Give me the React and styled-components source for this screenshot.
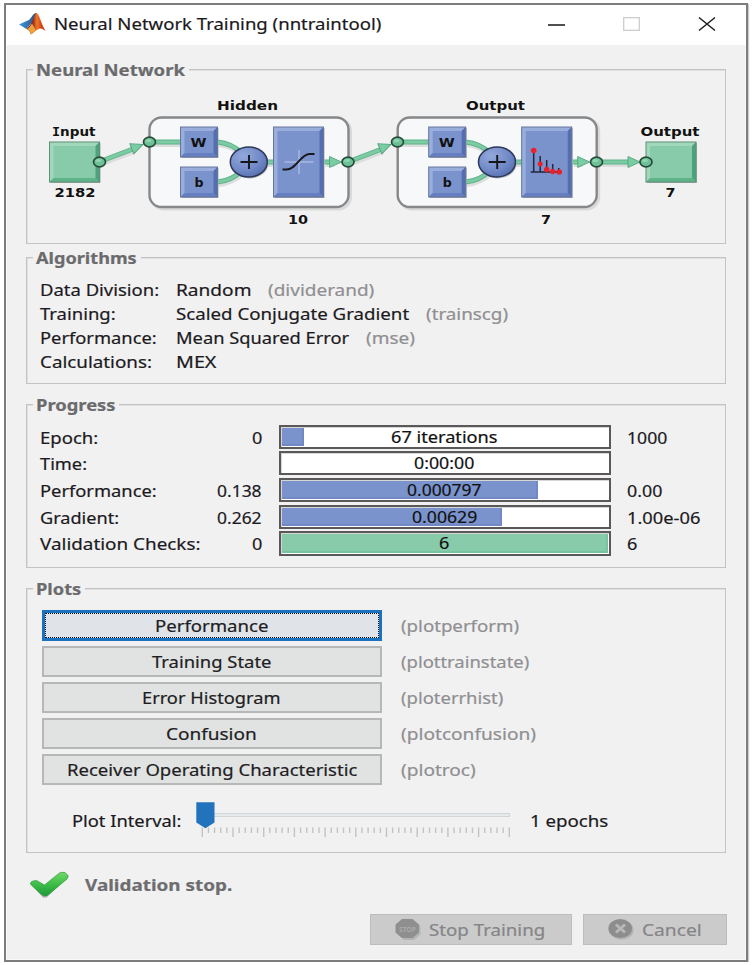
import React, { useLayoutEffect, useRef, useState } from "react";
import styled, { createGlobalStyle, css } from "styled-components";

const GlobalStyle = createGlobalStyle`
  * { box-sizing: border-box; }
  body { margin: 0; background: #fff; overflow: hidden; }
  #root { display: flow-root; }
  button { font: inherit; padding: 0; margin: 0; }
`;

const Window = styled.main`
  margin: 3px 0 0 4px;
  width: 744px;
  height: 959px;
  border: 2px solid #7b7d7f;
  box-shadow: 1px 1px 1px #cfcfcf, inset 0 0 0 1px #f9f9f9;
  background: #f1f1f1;
  font-family: "Noto Sans", "Open Sans", sans-serif;
  font-size: 16.3px;
  line-height: 24px;
  color: #1c1a1e;
`;

const TitleBar = styled.header`
  height: 40px;
  background: #fff;
  display: flex;
  align-items: center;
  padding: 0 30px 3px 13px;
`;

const Title = styled.h1`
  margin: 0 auto 0 8px;
  font-size: 16.3px;
  font-weight: 400;
  color: #1b191c;
`;

const Controls = styled.div`
  display: flex;
  gap: 58px;
  align-items: center;
`;

const TextSlot = styled.span`
  display: inline-block;
  width: ${(p) => p.$w}px;
  white-space: nowrap;
  text-align: left;
`;

const TextInner = styled.span`
  display: inline-block;
  transform-origin: 0 50%;
  -webkit-text-stroke: 0.2px currentColor;
`;

function Fit({ w, children }) {
  const ref = useRef(null);
  const [scale, setScale] = useState(1);
  useLayoutEffect(() => {
    setScale((w - 1) / ref.current.offsetWidth);
  }, [w]);
  return (
    <TextSlot $w={w}>
      <TextInner ref={ref} style={{ transform: `scaleX(${scale})` }}>
        {children}
      </TextInner>
    </TextSlot>
  );
}

const Panel = styled.section`
  margin: ${(p) => p.$gap}px 0 0 20px;
  width: 700px;
  height: ${(p) => p.$h}px;
  border: 1px solid #c3c3c3;
  box-shadow: inset 1px 1px 0 #e0e0e0;
`;

const Legend = styled.h2`
  margin: -12px 0 0 5.5px;
  padding: 0 3px;
  width: fit-content;
  height: 24px;
  background: #f1f1f1;
  font-size: 15.8px;
  line-height: 24px;
  font-weight: 700;
  color: #6b6b6d;
`;

const AlgoGrid = styled.dl`
  margin: 8px 0 0 13.4px;
  display: grid;
  grid-template-columns: 135.6px 1fr;
  grid-auto-rows: 24px;
`;

const Term = styled.dt``;
const Value = styled.dd`
  margin: 0;
  display: flex;
  gap: 16px;
`;

const Muted = styled.span`
  color: #8f8f91;
`;

const ProgressGrid = styled.div`
  margin: 7.5px 0 0 13.4px;
`;

const ProgressRow = styled.div`
  height: 26.7px;
  display: grid;
  grid-template-columns: 170px 53px 347.6px 1fr;
  align-items: start;
`;

const Cell = styled.div`
  line-height: 26px;
  text-align: ${(p) => (p.$right ? "right" : "left")};
  padding-left: ${(p) => (p.$pad ? "16.5px" : "0")};
`;

const Bar = styled.div`
  margin-left: 15.6px;
  width: 332px;
  height: 24.3px;
  border: 2px solid #5a5858;
  display: grid;
  background: #fff;
  box-shadow: inset 1px 1px 0 #d6d6d6;
  padding: 1px;
`;

const Fill = styled.div`
  grid-area: 1 / 1;
  background: ${(p) => (p.$green ? "#87cbaa" : "#7b93cc")};
  box-shadow: inset -2px -2px 0 ${(p) => (p.$green ? "#78c3a0" : "#7188c5")};
`;

const BarText = styled.div`
  grid-area: 1 / 1;
  text-align: center;
  line-height: 18px;
  color: #111;
`;

const Plots = styled.div`
  margin: 9px 0 0 15px;
  display: grid;
  grid-template-columns: 340px 1fr;
  column-gap: 19px;
  row-gap: 5px;
  grid-auto-rows: 31px;
  line-height: 32px;
`;

const PlotButton = styled.button`
  background: ${(p) => (p.$focus ? "#e0e4e8" : "#e1e3e2")};
  border: 2px solid #b6b8b7;
  color: #211d22;
  display: flex;
  justify-content: center;
  align-items: center;
  line-height: 25px;
  padding-top: 1px;
  ${(p) =>
    p.$focus &&
    css`
      border: 3px solid #1b72be;
      padding: 0;
    `}
`;

const FocusRing = styled.span`
  flex: 1;
  height: 100%;
  border: 1px dotted #111;
  line-height: 24px;
  text-align: center;
`;

const SliderRow = styled.div`
  display: flex;
  margin: 15px 0 0 45px;
  height: 40px;
`;

const SliderText = styled.div`
  padding-top: 8.500px;
`;

const Slider = styled.svg`
  margin: 0 19px 0 13px;
  flex: none;
`;

const Status = styled.div`
  display: flex;
  align-items: center;
  margin: 17px 0 0 23px;
  height: 30px;
  gap: 15px;
  font-weight: 700;
  font-size: 15.8px;
  color: #6d6d70;
`;

const Actions = styled.footer`
  display: flex;
  justify-content: flex-end;
  gap: 11px;
  margin: 14px 19px 0 0;
`;

const ActionButton = styled.button`
  width: ${(p) => p.$w}px;
  height: 31px;
  border: 1px solid #bdbdbd;
  background: #cbcbcb;
  color: #858587;
  display: flex;
  align-items: center;
  justify-content: flex-start;
  padding-left: 24px;
  gap: 8px;
`;

const Diagram = styled.svg`
  display: block;
  margin-top: -1px;
  margin-left: -1px;
`;

function Logo() {
  return (
    <svg width="27" height="23" viewBox="0 0 27 23">
      <defs>
        <linearGradient id="flame" x1="0" x2="1">
          <stop offset="0" stopColor="#5a2030" />
          <stop offset=".35" stopColor="#9c2c1a" />
          <stop offset=".55" stopColor="#ee7a28" />
          <stop offset=".75" stopColor="#d84a18" />
          <stop offset="1" stopColor="#b93a16" />
        </linearGradient>
        <linearGradient id="wing" x1="0" x2="1">
          <stop offset="0" stopColor="#3f9ad8" />
          <stop offset="1" stopColor="#244f88" />
        </linearGradient>
      </defs>
      <path d="M0 12.5 L7.5 9 Q10.5 8.5 12.5 5 Q15 .8 17.5 1 L14 9 L7.5 17 Z" fill="url(#wing)" />
      <path d="M7.500 17 Q12 13 14 7 Q16 1 17.800 1 Q19 1.200 21.500 8 Q24 15 26.500 19 Q22 15.500 19.500 17 Q16.500 18.500 12 22.500 Q11 18 7.500 17Z" fill="url(#flame)" />
      <path d="M8 17 Q11.500 15 13 11.500 L17 18.500 L12 22.500 Q11 18 8 17Z" fill="#f0a03a" />
    </svg>
  );
}

function Block({ x, y, w, h, green }) {
  const c = green ? ["#87cbaa", "#a9dcc2", "#5fb389", "#459f75"] : ["#7b93cc", "#a3b7e2", "#667fc0", "#516aae"];
  const b = 4;
  return (
    <g>
      <rect x={x + 1} y={y + 1} width={w} height={h} fill="#a8aaae" />
      <rect x={x} y={y} width={w} height={h} fill={c[0]} />
      <path d={`M${x} ${y}h${w}l${-b} ${b}h${-w + 2 * b}v${h - 2 * b}l${-b} ${b}z`} fill={c[1]} opacity=".75" />
      <path d={`M${x} ${y + h}h${w}l${-b} ${-b}h${-w + 2 * b}z`} fill={c[2]} />
      <path d={`M${x + w} ${y}v${h}l${-b} ${-b}v${-h + 2 * b}z`} fill={c[3]} opacity=".9" />
      <rect x={x} y={y} width={w} height={h} fill="none" stroke={green ? "#5f8f78" : "#66759c"} strokeWidth="1" />
    </g>
  );
}

function Port({ x, y }) {
  return (
    <g>
      <ellipse cx={x} cy={y} rx="6" ry="4.800" fill="#6cc296" stroke="#294b3b" strokeWidth="1.700" />
      <ellipse cx={x - 1} cy={y - 1.5} rx="3" ry="1.600" fill="#a0dcbd" opacity=".7" />
    </g>
  );
}

function Tip({ x, y, a = 0 }) {
  return (
    <path
      d="M0 0L-12 -5.500V5.500Z"
      fill="#7accA2"
      stroke="#55a47e"
      strokeWidth=".9"
      transform={`translate(${x} ${y}) rotate(${a})`}
    />
  );
}

function Wire({ d }) {
  return (
    <g fill="none">
      <path d={d} stroke="#dcdedd" strokeWidth="6" transform="translate(1 2)" />
      <path d={d} stroke="#5db389" strokeWidth="5" />
      <path d={d} stroke="#7ccba3" strokeWidth="3" />
    </g>
  );
}

function Word({ x, y, w, children, size = 12.5 }) {
  return (
    <text x={x} y={y} textLength={w} lengthAdjust="spacingAndGlyphs" fontSize={size}>
      {children}
    </text>
  );
}

function Layer({ x, children }) {
  return (
    <g transform={`translate(${x} 0)`}>
      <rect x="2" y="119" width="199" height="90" rx="12" fill="none" stroke="#dadada" strokeWidth="3" />
      <rect x="0" y="117.500" width="199" height="89.500" rx="12" fill="#f6f8fa" stroke="#858789" strokeWidth="2.400" />
      <Wire d="M0 142H32" />
      <Wire d="M68 142C78 143 86 147 92 153" />
      <Wire d="M68 182C78 181 86 177 92 171" />
      <Wire d="M110 162H126" />
      <Block x={31} y={127} w={37} h={30} />
      <Block x={31} y={167} w={37} h={30} />
      <ellipse cx="100" cy="163.500" rx="19" ry="15" fill="#b9bcc4" />
      <ellipse cx="99.300" cy="162" rx="18.500" ry="15" fill="url(#sum)" stroke="#2d3858" strokeWidth="1.500" />
      <path d="M91 162H108M99.500 155V169" stroke="#15171e" strokeWidth="1.900" fill="none" />
      <Word x={41} y={147} w={16} size={12}>W</Word>
      <Word x={45} y={187} w={9} size={12}>b</Word>
      <Block x={124} y={127} w={50} h={70} />
      {children}
      <Wire d="M175 162H184" />
      <Tip x={192} y={162} />
    </g>
  );
}

function NetworkDiagram() {
  return (
    <Diagram width="699" height="162" viewBox="26 81 699 162" fontFamily='"DejaVu Sans", Verdana, sans-serif' fontWeight="700" fill="#111">
      <defs>
        <radialGradient id="sum" cx=".35" cy=".3" r=".8">
          <stop offset="0" stopColor="#93a9dc" />
          <stop offset=".6" stopColor="#7189c6" />
          <stop offset="1" stopColor="#526bad" />
        </radialGradient>
      </defs>
      <text x="52" y="136" fontSize="12.500" textLength="43.500" lengthAdjust="spacingAndGlyphs">
        <tspan fontFamily="DejaVu Sans Mono">I</tspan>nput
      </text>
      <Word x={217} y={110} w={61}>Hidden</Word>
      <Word x={466} y={110} w={59}>Output</Word>
      <Word x={640.5} y={136} w={59}>Output</Word>
      <Word x={54.500} y={196.500} w={41}>2182</Word>
      <Word x={288} y={223.500} w={20}>10</Word>
      <Word x={541} y={223.500} w={10}>7</Word>
      <Word x={665.500} y={196.500} w={10}>7</Word>
      <Block x={49.500} y={142} w={50} h={40} green />
      <Block x={646} y={142} w={50} h={40} green />
      <Layer x={149.5}>
        <path d="M135 162H164M149.500 150V174" stroke="#a9b8df" strokeWidth="1.500" />
        <path d="M133 169.500H137C147 169.500 151 154 160 154H165" fill="none" stroke="#17191e" strokeWidth="1.900" />
      </Layer>
      <Layer x={397.7}>
        <path d="M133 172H164M136 172V151M142.500 172V156M149 172V160M155 172V164M161 172V168" stroke="#22283c" strokeWidth="1.500" />
        <g fill="#ec2028">
          <circle cx="136" cy="150.500" r="2.800" />
          <circle cx="142.500" cy="164" r="2.500" />
          <circle cx="149" cy="169.500" r="2.700" />
          <circle cx="155" cy="171.500" r="2.700" />
          <circle cx="161.500" cy="172" r="2.800" />
        </g>
      </Layer>
      <Wire d="M104 160L133 149" />
      <Tip x={143} y={144.500} a={-21} />
      <Wire d="M353 160L382 149" />
      <Tip x={391} y={144.500} a={-21} />
      <Wire d="M601 162H628" />
      <Tip x={640} y={162} />
      <Port x={99.5} y={162} />
      <Port x={149.5} y={142} />
      <Port x={348} y={162} />
      <Port x={397.500} y={142} />
      <Port x={596.500} y={162} />
      <Port x={646} y={162} />
    </Diagram>
  );
}

const progress = [
  { label: "Epoch:", lw: 59, from: "0", fw: 11, fill: 22, text: "67 iterations", tw: 107, to: "1000", ow: 41 },
  { label: "Time:", lw: 48, text: "0:00:00", tw: 61 },
  { label: "Performance:", lw: 118, from: "0.138", fw: 46, fill: 256, text: "0.000797", tw: 76, to: "0.00", ow: 36 },
  { label: "Gradient:", lw: 80, from: "0.262", fw: 46, fill: 220, text: "0.00629", tw: 66, to: "1.00e-06", ow: 74 },
  { label: "Validation Checks:", lw: 162, from: "0", fw: 11, fill: 326, green: true, text: "6", tw: 11, to: "6", ow: 11 },
];

const plots = [
  { name: "Performance", w: 114, fn: "(plotperform)", fw: 119 },
  { name: "Training State", w: 121, fn: "(plottrainstate)", fw: 129 },
  { name: "Error Histogram", w: 140, fn: "(ploterrhist)", fw: 103 },
  { name: "Confusion", w: 92, fn: "(plotconfusion)", fw: 136 },
  { name: "Receiver Operating Characteristic", w: 291, fn: "(plotroc)", fw: 76 },
];

const algorithms = [
  { label: "Data Division:", lw: 120, value: "Random", vw: 76, fn: "(dividerand)", fw: 107 },
  { label: "Training:", lw: 77, value: "Scaled Conjugate Gradient", vw: 234, fn: "(trainscg)", fw: 83 },
  { label: "Performance:", lw: 118, value: "Mean Squared Error", vw: 174, fn: "(mse)", fw: 50 },
  { label: "Calculations:", lw: 113, value: "MEX", vw: 41 },
];

export default function App() {
  const ticks = Array.from({ length: 51 }, (_, i) => i);
  return (
    <>
      <GlobalStyle />
      <Window>
        <TitleBar>
          <Logo />
          <Title><Fit w={328}>Neural Network Training (nntraintool)</Fit></Title>
          <Controls>
            <svg width="17" height="16"><path d="M0 9H17" stroke="#222" strokeWidth="1.600" /></svg>
            <svg width="17" height="16"><rect x=".7" y="1.700" width="15.600" height="12.600" fill="none" stroke="#cdcdcd" strokeWidth="1.300" /></svg>
            <svg width="18" height="16"><path d="M1 1.500L17 14.500M17 1.500L1 14.500" stroke="#222" strokeWidth="1.600" /></svg>
          </Controls>
        </TitleBar>

        <Panel $gap={24} $h={175}>
          <Legend><Fit w={150}>Neural Network</Fit></Legend>
          <NetworkDiagram />
        </Panel>

        <Panel $gap={13} $h={127}>
          <Legend><Fit w={102}>Algorithms</Fit></Legend>
          <AlgoGrid>
            {algorithms.map((a) => (
              <React.Fragment key={a.label}>
                <Term><Fit w={a.lw}>{a.label}</Fit></Term>
                <Value>
                  <Fit w={a.vw}>{a.value}</Fit>
                  {a.fn && <Muted><Fit w={a.fw}>{a.fn}</Fit></Muted>}
                </Value>
              </React.Fragment>
            ))}
          </AlgoGrid>
        </Panel>

        <Panel $gap={20} $h={164}>
          <Legend><Fit w={80}>Progress</Fit></Legend>
          <ProgressGrid>
            {progress.map((p) => (
              <ProgressRow key={p.label}>
                <Cell><Fit w={p.lw}>{p.label}</Fit></Cell>
                <Cell $right>{p.from && <Fit w={p.fw}>{p.from}</Fit>}</Cell>
                <Bar>
                  {p.fill && <Fill $green={p.green} style={{ width: p.fill }} />}
                  <BarText><Fit w={p.tw}>{p.text}</Fit></BarText>
                </Bar>
                <Cell $pad>{p.to && <Fit w={p.ow}>{p.to}</Fit>}</Cell>
              </ProgressRow>
            ))}
          </ProgressGrid>
        </Panel>

        <Panel $gap={20} $h={265}>
          <Legend><Fit w={46}>Plots</Fit></Legend>
          <Plots>
            {plots.map((p, i) => (
              <React.Fragment key={p.name}>
                <PlotButton $focus={i === 0}>
                  {i === 0 ? <FocusRing><Fit w={p.w}>{p.name}</Fit></FocusRing> : <Fit w={p.w}>{p.name}</Fit>}
                </PlotButton>
                <Muted><Fit w={p.fw}>{p.fn}</Fit></Muted>
              </React.Fragment>
            ))}
          </Plots>
          <SliderRow>
            <SliderText><Fit w={110}>Plot Interval:</Fit></SliderText>
            <Slider width="316" height="40" viewBox="195 800 316 40">
              <rect x="210" y="813.500" width="299.500" height="3" fill="#e7eaeb" stroke="#d3d6d8" />
              {ticks.map((i) => (
                <path key={i} d={`M${202.3 + i * 6.14} 827.500V${i % 5 ? 833 : 837}`} stroke="#c3c3c3" strokeWidth="1.400" />
              ))}
              <path d="M196.300 802.300H214.500V822.500L205.400 828.300L196.300 822.500Z" fill="#2273bc" />
            </Slider>
            <SliderText><Fit w={79}>1 epochs</Fit></SliderText>
          </SliderRow>
        </Panel>

        <Status>
          <svg width="41" height="28" viewBox="29 870 41 28">
            <defs>
              <linearGradient id="ok" x1="0" y1="0" x2="0" y2="1">
                <stop offset="0" stopColor="#70d968" />
                <stop offset=".6" stopColor="#35b742" />
                <stop offset="1" stopColor="#21983a" />
              </linearGradient>
            </defs>
            <path d="M31.500 884L37 881L44.500 886.500L61.500 873Q65 871.500 69 875L46.500 896.500H43Z" fill="#808580" opacity=".65" />
            <path d="M30.300 883Q30.500 880.500 33 880L36.500 879.500L44.500 884L59.500 872Q62 870.800 65 871.600L67.500 874Q68.500 876 67 878L48 894Q45 896 41.500 893.500Z" fill="url(#ok)" stroke="#2c9a3b" strokeWidth=".7" />
          </svg>
          <Fit w={148}>Validation stop.</Fit>
        </Status>

        <Actions>
          <ActionButton $w={201.5} disabled>
            <svg width="26" height="21" viewBox="0 0 26 21">
              <path d="M8 1H18L24.500 6V14.500L18 20H8L2 14.500V6Z" fill="#b4b4b4" transform="translate(1 1)" />
              <path d="M7 0H17.500L24 5.500V13.500L17.500 19H7L.500 13.500V5.500Z" fill="#8f8f8f" />
              <text x="4" y="12.500" fontSize="7" fontWeight="700" textLength="17" lengthAdjust="spacingAndGlyphs" fill="#aaa">STOP</text>
            </svg>
            <Fit w={117}>Stop Training</Fit>
          </ActionButton>
          <ActionButton $w={144.5} disabled>
            <svg width="26" height="21" viewBox="0 0 26 21">
              <ellipse cx="13.500" cy="11" rx="12" ry="9.500" fill="#b2b2b2" />
              <ellipse cx="12.200" cy="9.500" rx="11.800" ry="9.500" fill="#8d8d8d" />
              <path d="M8 5.500L17 13.500M17 5.500L8 13.500" stroke="#b8b8b8" strokeWidth="3" />
            </svg>
            <Fit w={61}>Cancel</Fit>
          </ActionButton>
        </Actions>
      </Window>
    </>
  );
}
